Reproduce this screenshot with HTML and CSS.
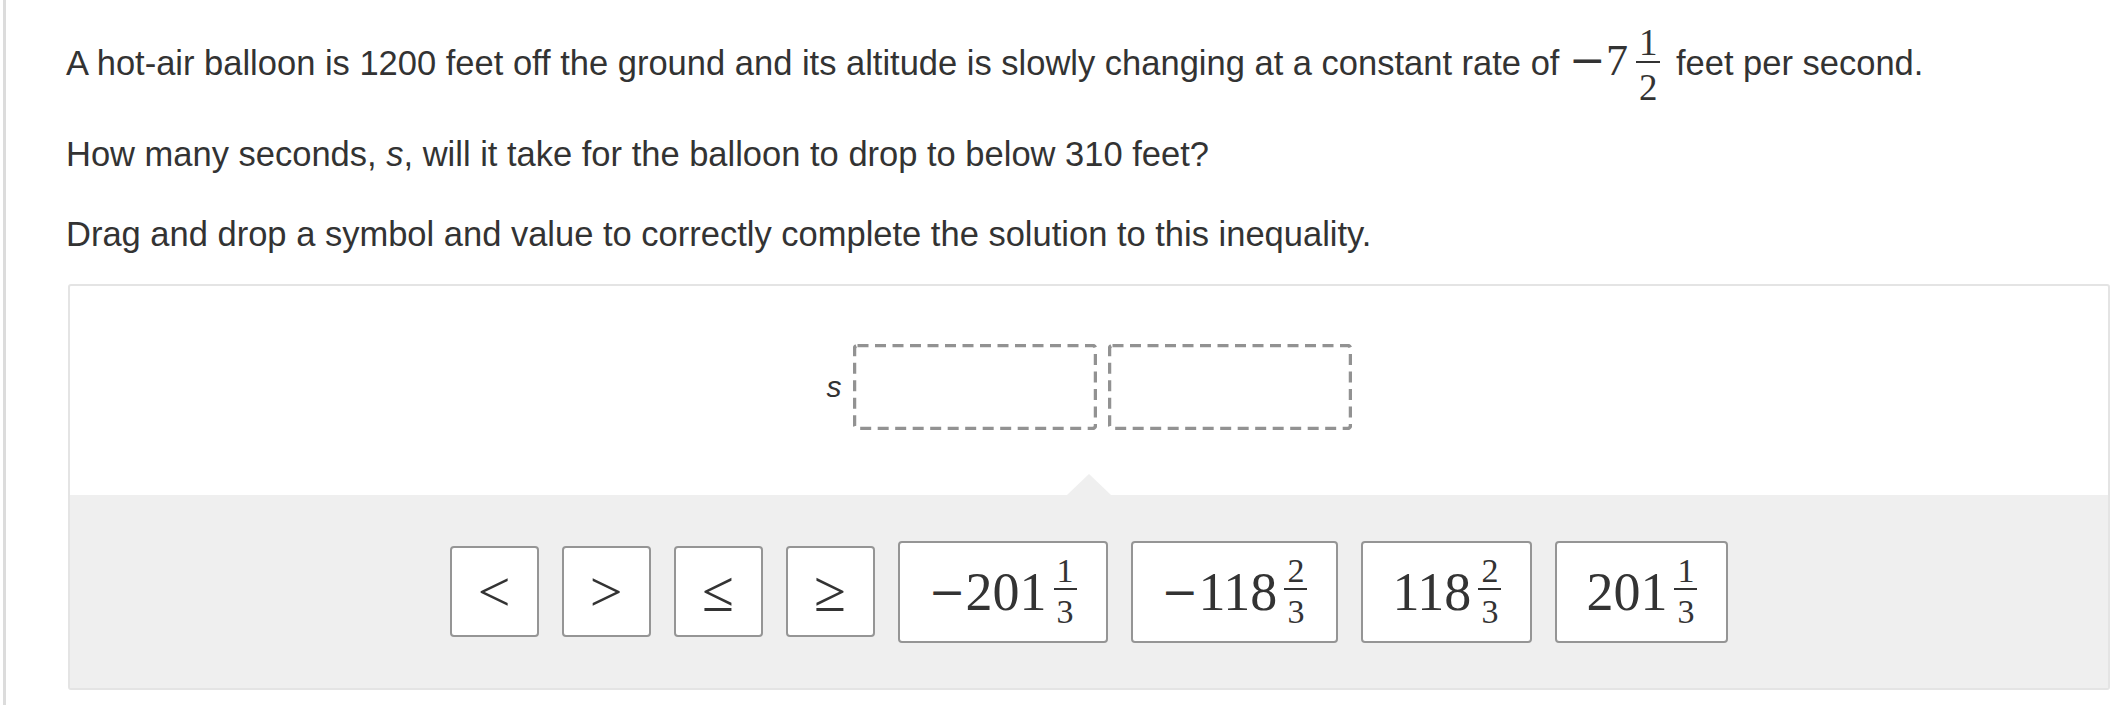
FILE: index.html
```html
<!DOCTYPE html>
<html lang="en">
<head>
    <meta charset="UTF-8">
    <title>Inequality drag and drop</title>
    <link rel="stylesheet" href="styles.css">
</head>
<body>

<div class="page">
    <!-- question stem -->
    <p class="stem">A hot-air balloon is 1200 feet off the ground and its altitude is slowly changing at a constant rate of <span class="math"><span class="minus">−</span>7<span class="frac"><span class="num">1</span><span class="den">2</span></span></span> feet per second.</p>
    <p class="stem">How many seconds, <i>s</i>, will it take for the balloon to drop to below 310 feet?</p>
    <p class="stem last">Drag and drop a symbol and value to correctly complete the solution to this inequality.</p>

    <!-- drag and drop area -->
    <div class="dnd">
        <div class="answer">
            <span class="var">s</span>
            <div class="drop">
                <svg width="244" height="86"><rect x="1.5" y="1.5" width="241" height="83" rx="3" /></svg>
            </div>
            <div class="drop">
                <svg width="244" height="86"><rect x="1.5" y="1.5" width="241" height="83" rx="3" /></svg>
            </div>
        </div>

        <div class="bank">
            <div class="tile sym">&lt;</div>
            <div class="tile sym">&gt;</div>
            <div class="tile sym">≤</div>
            <div class="tile sym">≥</div>
            <div class="tile val"><span class="minus">−</span>201<span class="frac"><span class="num">1</span><span class="den">3</span></span></div>
            <div class="tile val"><span class="minus">−</span>118<span class="frac"><span class="num">2</span><span class="den">3</span></span></div>
            <div class="tile val">118<span class="frac"><span class="num">2</span><span class="den">3</span></span></div>
            <div class="tile val">201<span class="frac"><span class="num">1</span><span class="den">3</span></span></div>
        </div>
    </div>
</div>

</body>
</html>
```

FILE: styles.css
```css
/* page */
body {
    margin: 0;
    background: #fff;
    color: #333;
    font-family: "Liberation Sans", Arial, sans-serif;
}

.page {
    margin-left: 3px;
    border-left: 3px solid #dcdcdc;
    padding: 24px 16px 15px 60px;
    min-height: 705px;
    box-sizing: border-box;
}

/* question text */
.stem {
    margin: 0 0 32px;
    font-size: 34.5px;
    line-height: 48px;
}

.stem.last {
    margin-bottom: 26px;
}

.stem i {
    font-style: italic;
}

/* math bits */
.math {
    font-family: "Liberation Serif", "Times New Roman", serif;
    font-size: 44px;
}

.minus {
    font-family: "DejaVu Serif", serif;
    font-size: 44px;
}

.frac {
    display: inline-flex;
    flex-direction: column;
    align-items: center;
    vertical-align: 20px;
    margin: 0 6px -8px 8px;
    font-family: "Liberation Serif", "Times New Roman", serif;
    font-size: 37px;
    line-height: 1;
}

.frac .num {
    padding: 0 3px;
    border-bottom: 2px solid #333;
}

.frac .den {
    padding-top: 6px;
}

/* drag and drop container */
.dnd {
    margin-left: 2px;
    border: 2px solid #e4e4e4;
    border-radius: 3px;
}

.answer {
    height: 209px;
    padding-top: 58px;
    box-sizing: border-box;
    display: flex;
    justify-content: center;
    align-items: flex-start;
    gap: 11px;
}

.var {
    height: 86px;
    display: flex;
    align-items: center;
    font-size: 30px;
    font-style: italic;
}

.drop {
    width: 244px;
    height: 86px;
}

.drop svg {
    display: block;
}

.drop rect {
    fill: none;
    stroke: #929292;
    stroke-width: 3.5;
    stroke-dasharray: 11 6.5;
}

/* tile bank */
.bank {
    position: relative;
    height: 193px;
    background: #efefef;
    display: flex;
    justify-content: center;
    align-items: center;
    gap: 23px;
}

.bank::before {
    content: "";
    position: absolute;
    top: -21px;
    left: 50%;
    margin-left: -22px;
    border-left: 22px solid transparent;
    border-right: 22px solid transparent;
    border-bottom: 21px solid #efefef;
}

.tile {
    background: #fff;
    border: 2px solid #959595;
    border-radius: 4px;
    box-sizing: border-box;
    display: flex;
    align-items: center;
    justify-content: center;
    font-family: "Liberation Serif", "Times New Roman", serif;
    line-height: 1;
    color: #333;
}

.tile.sym {
    width: 89px;
    height: 91px;
    font-size: 58px;
}

.tile.val {
    height: 102px;
    padding: 0 29px;
    font-size: 54px;
}

.tile .minus {
    font-size: 44px;
}

.tile .frac {
    vertical-align: 22px;
    margin: 0 0 0 7px;
    font-size: 34px;
}

.tile .frac .den {
    padding-top: 5px;
}
```
